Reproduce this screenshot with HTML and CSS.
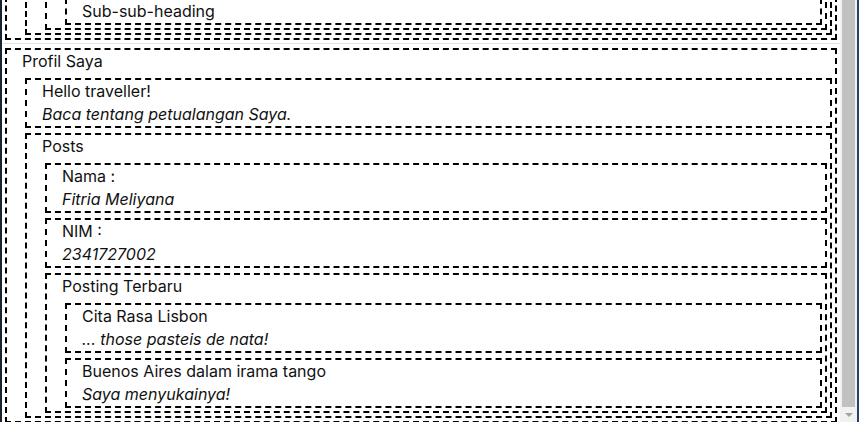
FILE: index.html
```html
<!DOCTYPE html>
<html lang="id">
<head>
<meta charset="utf-8">
<title>Profil Saya</title>
<link rel="stylesheet" href="styles.css">
</head>
<body>
<div class="window">
  <div class="edge edge-left"></div>
  <div class="viewport">
    <header class="box box-cut">
      <div class="box">
        <div class="box">
          <div class="box">
            <p class="line">Sub-sub-heading</p>
          </div>
        </div>
      </div>
    </header>
    <div class="divider"></div>
    <main class="box box-profile">
      <p class="line">Profil Saya</p>
      <section class="box">
        <p class="line">Hello traveller!</p>
        <p class="line em">Baca tentang petualangan Saya.</p>
      </section>
      <section class="box">
        <p class="line">Posts</p>
        <article class="box">
          <p class="line">Nama :</p>
          <p class="line em">Fitria Meliyana</p>
        </article>
        <article class="box">
          <p class="line">NIM :</p>
          <p class="line em">2341727002</p>
        </article>
        <article class="box">
          <p class="line">Posting Terbaru</p>
          <div class="box">
            <p class="line">Cita Rasa Lisbon</p>
            <p class="line em">... those pasteis de nata!</p>
          </div>
          <div class="box">
            <p class="line">Buenos Aires dalam irama tango</p>
            <p class="line em">Saya menyukainya!</p>
          </div>
        </article>
      </section>
    </main>
  </div>
  <div class="scrollbar">
    <div class="thumb"></div>
    <div class="arrow-btn"><span class="arrow"></span></div>
  </div>
  <div class="edge edge-right"></div>
</div>
</body>
</html>
```
FILE: styles.css
```css
html, body {
  margin: 0;
  padding: 0;
  height: 100%;
}

body {
  font-family: Inter, "Noto Sans", "Liberation Sans", sans-serif;
  font-size: 16px;
  line-height: 23px;
  color: #111;
  background: #fff;
  overflow: hidden;
}

.window {
  display: flex;
  height: 422px;
}

.edge {
  width: 2px;
  flex: none;
}

.edge-left {
  background: #1a2232;
}

.edge-right {
  background: #27406a;
}

.viewport {
  flex: 1;
  min-width: 0;
  overflow: hidden;
  display: flow-root;
}

.box {
  border: 2px dashed #000;
  margin: 5px 3px 3px 3px;
  padding: 0 0 0 15px;
}

.box-cut {
  margin-top: -23px;
}

.box-profile {
  margin-top: 4px;
}

.divider {
  height: 1px;
  background: #e3e3e3;
  margin: 3px 0 0;
}

.line {
  margin: 0;
}

.em {
  font-style: italic;
}

.scrollbar {
  width: 17px;
  flex: none;
  background: #f1f1f1;
  display: flex;
  flex-direction: column;
}

.thumb {
  flex: 1;
  margin: 0 2px;
  background: #c1c1c1;
}

.arrow-btn {
  height: 15px;
  display: flex;
  align-items: center;
  justify-content: center;
}

.arrow {
  width: 0;
  height: 0;
  border-left: 4px solid transparent;
  border-right: 4px solid transparent;
  border-top: 4px solid #a3a3a3;
}
```
